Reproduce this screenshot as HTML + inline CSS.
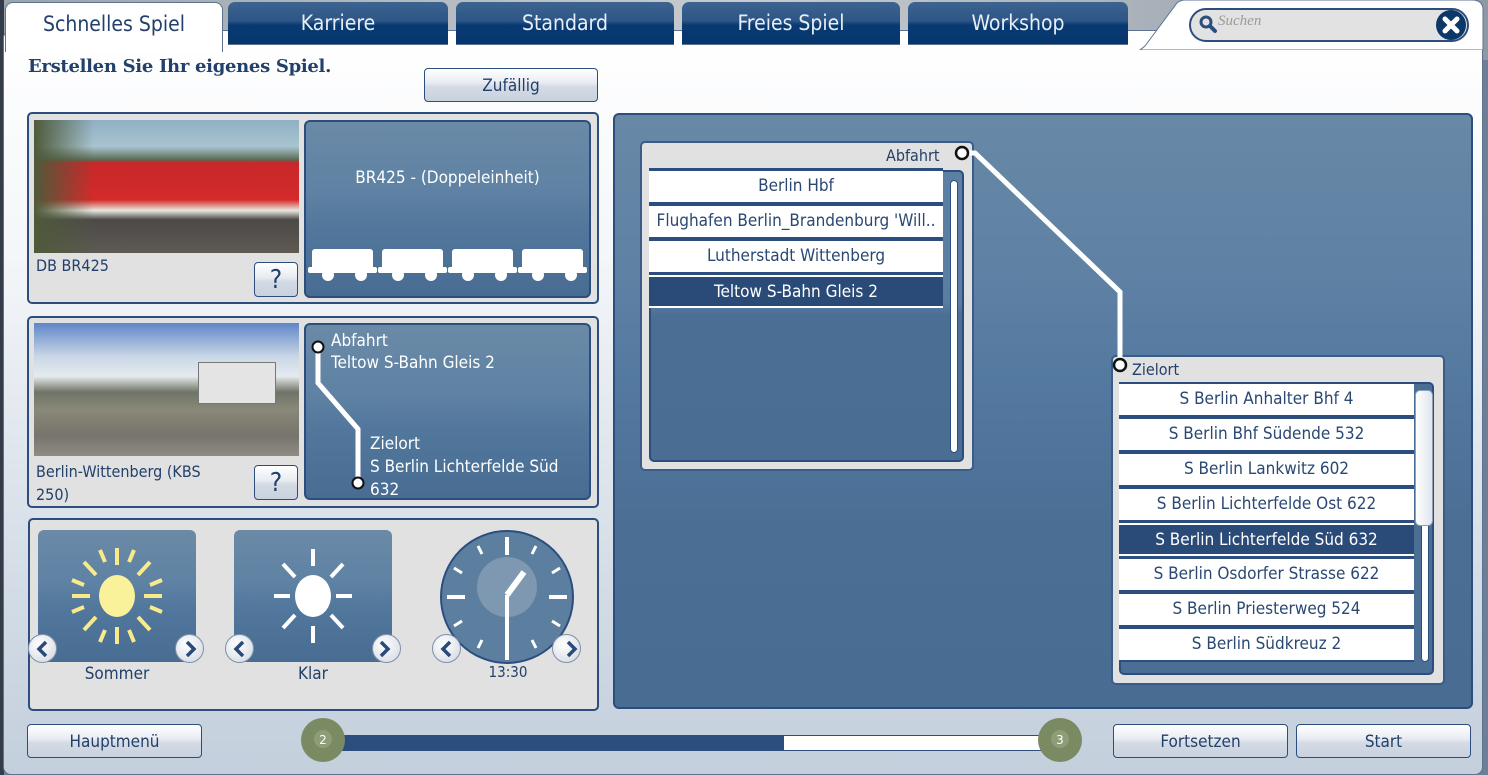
<!DOCTYPE html>
<html><head><meta charset="utf-8"><style>
*{box-sizing:border-box;margin:0;padding:0}
body{width:1488px;height:775px;overflow:hidden;position:relative;background:#6c7f96;font-family:"DejaVu Sans Condensed","Liberation Sans",sans-serif;color:#23406a}
.a{position:absolute}
.win{left:3px;top:30px;width:1480px;height:745px;border-radius:8px;background:linear-gradient(#ffffff 0%,#f4f6f9 30%,#dde4ec 60%,#c3cfdc 100%);border:1px solid #5d7390}
.tab{top:2px;height:43px;border-radius:7px 7px 0 0;background:linear-gradient(#3d6490 0%,#2d5586 45%,#083a72 55%,#06366c 100%);color:#e8eef6;font-size:21px;text-align:center;line-height:42px;border-bottom:1px solid #5d7390}
.box{border:2px solid #2c4e7e;border-radius:5px;background:#e1e1e1}
.blue{border:2px solid #2c4e7e;border-radius:6px;background:linear-gradient(#6a8aa6 0%,#5f82a4 40%,#52779c 60%,#486c92 100%)}
.btn{border:1px solid #2c4e7e;border-radius:4px;background:linear-gradient(#ffffff,#e7ebf1 45%,#d4dbe5 55%,#c8d1de);font-size:17px;text-align:center;color:#23406a}
.row{height:31px;background:#fff;font-size:17px;text-align:center;line-height:30px;color:#2a4872;white-space:nowrap;overflow:hidden}
.sel{background:#2a4a78;color:#fff}
.arr{width:29px;height:29px;border-radius:50%;background:radial-gradient(circle at 40% 35%,#fff,#cfd6e0);border:1px solid #8091a8}
.wl{color:#fff;font-size:17px}
</style></head><body>
<div class="a" style="left:0;top:0;width:1488px;height:60px;background:linear-gradient(90deg,#9aa4ad,#c8ccd0 50%,#8e99a6)"></div>
<div class="a" style="left:0;top:0;width:4px;height:775px;background:#333c48"></div>
<div class="a win"></div>
<svg class="a" style="left:0;top:0" width="1488" height="50"><path d="M1145 46 L1177 3 Q1180 0 1186 0 L1472 0 Q1483 0 1483 10 L1483 50 L1140 50 Z" fill="#fff" stroke="#5d7390"/></svg>
<div class="a" style="left:5px;top:2px;width:218px;height:50px;background:#fff;border:1px solid #5d7390;border-bottom:none;border-radius:8px 8px 0 0;font-size:21px;color:#23406a;text-align:center;line-height:42px">Schnelles Spiel</div>
<div class="a tab" style="left:228px;width:220px">Karriere</div>
<div class="a tab" style="left:456px;width:218px">Standard</div>
<div class="a tab" style="left:682px;width:218px">Freies Spiel</div>
<div class="a tab" style="left:908px;width:220px">Workshop</div>
<div class="a" style="left:1189px;top:8px;width:280px;height:34px;border:2px solid #2c4e7e;border-radius:17px;background:#e2e2e2"></div>
<svg class="a" style="left:1198px;top:14px" width="20" height="20"><circle cx="8" cy="8" r="5" fill="none" stroke="#2c4e7e" stroke-width="3"/><path d="M12 12 L17 17" stroke="#2c4e7e" stroke-width="4" stroke-linecap="round"/></svg>
<div class="a" style="left:1218px;top:13px;font-family:'Liberation Serif',serif;font-style:italic;font-size:15px;color:#9a9a9a">Suchen</div>
<svg class="a" style="left:1435px;top:9px" width="32" height="32"><circle cx="16" cy="16" r="15" fill="#0c3868"/><path d="M10 10 L22 22 M22 10 L10 22" stroke="#fff" stroke-width="5" stroke-linecap="round"/></svg>

<div class="a" style="left:28px;top:56px;font-family:'DejaVu Serif','Liberation Serif',serif;font-weight:bold;font-size:18px;color:#23406a;letter-spacing:-0.3px">Erstellen Sie Ihr eigenes Spiel.</div>
<div class="a btn" style="left:424px;top:68px;width:174px;height:34px;line-height:34px">Zufällig</div>

<div class="a box" style="left:27px;top:112px;width:572px;height:192px"></div>
<div class="a" style="left:34px;top:120px;width:265px;height:133px;background:linear-gradient(180deg,#8fb0c4 0%,#a9c4d0 20%,#5a6a52 30%,#c8282a 32%,#d42a2a 60%,#e8e8e0 68%,#4c4a48 75%,#5e5a52 100%)"></div>
<div class="a" style="left:34px;top:120px;width:60px;height:133px;background:linear-gradient(90deg,#4e5a3a,rgba(0,0,0,0))"></div>
<div class="a" style="left:36px;top:256px;font-size:16px">DB BR425</div>
<div class="a btn" style="left:254px;top:262px;width:44px;height:35px;font-size:26px;line-height:34px">?</div>
<div class="a blue" style="left:304px;top:120px;width:287px;height:178px"></div>
<div class="a wl" style="left:304px;top:168px;width:287px;text-align:center">BR425 - (Doppeleinheit)</div>
<svg class="a" style="left:306px;top:247px" width="284" height="40">
<g fill="#fff">
<rect x="6" y="2" width="61" height="24" rx="3"/><rect x="2" y="20" width="69" height="6" rx="2"/><circle cx="22" cy="28" r="6"/><circle cx="55" cy="28" r="6"/>
<rect x="76" y="2" width="61" height="24" rx="3"/><rect x="72" y="20" width="69" height="6" rx="2"/><circle cx="92" cy="28" r="6"/><circle cx="125" cy="28" r="6"/>
<rect x="146" y="2" width="61" height="24" rx="3"/><rect x="142" y="20" width="69" height="6" rx="2"/><circle cx="162" cy="28" r="6"/><circle cx="195" cy="28" r="6"/>
<rect x="216" y="2" width="61" height="24" rx="3"/><rect x="212" y="20" width="69" height="6" rx="2"/><circle cx="232" cy="28" r="6"/><circle cx="265" cy="28" r="6"/>
</g></svg>

<div class="a box" style="left:27px;top:316px;width:572px;height:192px"></div>
<div class="a" style="left:34px;top:323px;width:265px;height:133px;background:linear-gradient(180deg,#5f86c8 0%,#c8d6e6 25%,#e6ebef 40%,#6e7466 52%,#8a8878 65%,#76746c 85%,#8f8c84 100%)"></div>
<div class="a" style="left:198px;top:362px;width:78px;height:42px;background:#e4e4e4;border:1px solid #777"></div>
<div class="a" style="left:36px;top:460px;font-size:16px;line-height:23px">Berlin-Wittenberg (KBS<br>250)</div>
<div class="a btn" style="left:254px;top:465px;width:44px;height:35px;font-size:26px;line-height:34px">?</div>
<div class="a blue" style="left:304px;top:323px;width:287px;height:177px"></div>
<svg class="a" style="left:304px;top:323px" width="80" height="177"><path d="M14 24 L14 60 L54 106 L54 160" fill="none" stroke="#fff" stroke-width="5"/><circle cx="14" cy="24" r="5.5" fill="#fff" stroke="#111" stroke-width="2"/><circle cx="54" cy="160" r="5.5" fill="#fff" stroke="#111" stroke-width="2"/></svg>
<div class="a wl" style="left:331px;top:330px;line-height:22px">Abfahrt<br>Teltow S-Bahn Gleis 2</div>
<div class="a wl" style="left:370px;top:433px;line-height:23px">Zielort<br>S Berlin Lichterfelde Süd<br>632</div>

<div class="a box" style="left:28px;top:518px;width:571px;height:193px"></div>
<div class="a blue" style="left:38px;top:530px;width:158px;height:132px;border:none"></div>
<svg class="a" style="left:38px;top:530px" width="158" height="132"><g stroke="#f8ea8a" stroke-width="4"><path d="M52 66 L34 66 M106 66 L124 66 M79 18 L79 35 M79 97 L79 114 M58 45 L46 32 M100 45 L112 32 M58 87 L46 100 M100 87 L112 100 M62 20 L67 32 M96 20 L91 32 M62 112 L67 100 M96 112 L91 100 M34 50 L46 55 M124 50 L112 55 M34 82 L46 77 M124 82 L112 77"/></g><ellipse cx="79" cy="66" rx="18" ry="21" fill="#faf29a"/></svg>
<div class="a arr" style="left:28px;top:634px"></div><div class="a arr" style="left:175px;top:634px"></div>
<svg class="a" style="left:28px;top:634px" width="180" height="30"><path d="M18 8 L11 15 L18 22" fill="none" stroke="#2a4a78" stroke-width="3.5"/><path d="M159 8 L166 15 L159 22" fill="none" stroke="#2a4a78" stroke-width="3.5"/></svg>
<div class="a" style="left:38px;top:664px;width:158px;text-align:center;font-size:17px">Sommer</div>
<div class="a blue" style="left:234px;top:530px;width:158px;height:132px;border:none"></div>
<svg class="a" style="left:234px;top:530px" width="158" height="132"><g stroke="#fff" stroke-width="4"><path d="M56 66 L40 66 M102 66 L118 66 M79 19 L79 36 M79 96 L79 113 M61 47 L49 34 M97 47 L109 34 M61 85 L49 98 M97 85 L109 98"/></g><ellipse cx="79" cy="66" rx="18" ry="21" fill="#fff"/></svg>
<div class="a arr" style="left:225px;top:634px"></div><div class="a arr" style="left:372px;top:634px"></div>
<svg class="a" style="left:225px;top:634px" width="180" height="30"><path d="M18 8 L11 15 L18 22" fill="none" stroke="#2a4a78" stroke-width="3.5"/><path d="M156 8 L163 15 L156 22" fill="none" stroke="#2a4a78" stroke-width="3.5"/></svg>
<div class="a" style="left:234px;top:664px;width:158px;text-align:center;font-size:17px">Klar</div>
<svg class="a" style="left:438px;top:530px" width="140" height="136"><circle cx="69" cy="67" r="66" fill="#5c7fa0" stroke="#2c4e7e" stroke-width="2"/><circle cx="69" cy="57" r="30" fill="#7f98b2"/>
<g stroke="#fff" stroke-width="4"><path d="M69 7 L69 25 M69 109 L69 127 M9 67 L27 67 M111 67 L129 67"/></g>
<g stroke="#fff" stroke-width="3"><path d="M98 16 L94 24 M122 38 L114 43 M122 96 L114 91 M98 118 L94 110 M40 118 L44 110 M16 96 L24 91 M16 38 L24 43 M40 16 L44 24"/></g>
<path d="M69 65 L69 130" stroke="#fff" stroke-width="4"/><path d="M69 65 L86 42" stroke="#fff" stroke-width="6"/></svg>
<div class="a arr" style="left:432px;top:634px"></div><div class="a arr" style="left:552px;top:634px"></div>
<svg class="a" style="left:432px;top:634px" width="160" height="30"><path d="M18 8 L11 15 L18 22" fill="none" stroke="#2a4a78" stroke-width="3.5"/><path d="M136 8 L143 15 L136 22" fill="none" stroke="#2a4a78" stroke-width="3.5"/></svg>
<div class="a" style="left:438px;top:663px;width:140px;text-align:center;font-size:15px">13:30</div>

<div class="a blue" style="left:613px;top:113px;width:860px;height:596px;background:linear-gradient(#6888a6 0%,#5f82a4 25%,#5479a0 45%,#4a6e94 70%,#486c92 100%)"></div>
<div class="a box" style="left:640px;top:141px;width:334px;height:330px;border-color:#3b5c88"></div>
<div class="a" style="left:886px;top:146px;font-size:16px">Abfahrt</div>
<div class="a" style="left:649px;top:170px;width:315px;height:292px;border-radius:5px;background:linear-gradient(#5c7fa3 0%,#597ea4 45%,#4a6e94 50%,#496d93 100%);border:2px solid #2c4e7e"></div>
<div class="a" style="left:950px;top:180px;width:8px;height:273px;background:#fff;border-radius:4px;border:1px solid #2c4e7e"></div>
<div class="a" style="left:649px;top:168px;width:294px;height:140px;background:#2c4e7e"></div>
<div class="a row" style="left:649px;top:171px;width:294px">Berlin Hbf</div>
<div class="a row" style="left:649px;top:206px;width:294px">Flughafen Berlin_Brandenburg 'Will..</div>
<div class="a row" style="left:649px;top:241px;width:294px">Lutherstadt Wittenberg</div>
<div class="a row sel" style="left:649px;top:275px;width:294px;border-top:2px solid #fff;border-bottom:2px solid #fff;height:33px">Teltow S-Bahn Gleis 2</div>

<div class="a box" style="left:1111px;top:355px;width:334px;height:330px;border-color:#3b5c88"></div>
<svg class="a" style="left:950px;top:140px" width="190" height="240"><path d="M12 13 L25 13 L170 152 L170 220" fill="none" stroke="#fff" stroke-width="5"/><circle cx="12" cy="13" r="6" fill="#fff" stroke="#111" stroke-width="2.5"/><circle cx="170" cy="225" r="6" fill="#fff" stroke="#111" stroke-width="2.5"/></svg>
<div class="a" style="left:1132px;top:360px;font-size:16px">Zielort</div>
<div class="a" style="left:1119px;top:382px;width:315px;height:293px;border-radius:5px;background:#4a6e94;border:2px solid #2c4e7e"></div>
<div class="a" style="left:1119px;top:382px;width:295px;height:280px;background:#2c4e7e"></div>
<div class="a row" style="left:1119px;top:384px;width:295px">S Berlin Anhalter Bhf 4</div>
<div class="a row" style="left:1119px;top:419px;width:295px">S Berlin Bhf Südende 532</div>
<div class="a row" style="left:1119px;top:454px;width:295px">S Berlin Lankwitz 602</div>
<div class="a row" style="left:1119px;top:489px;width:295px">S Berlin Lichterfelde Ost 622</div>
<div class="a row sel" style="left:1119px;top:523px;width:295px;border-top:2px solid #fff;border-bottom:2px solid #fff;height:33px">S Berlin Lichterfelde Süd 632</div>
<div class="a row" style="left:1119px;top:559px;width:295px">S Berlin Osdorfer Strasse 622</div>
<div class="a row" style="left:1119px;top:594px;width:295px">S Berlin Priesterweg 524</div>
<div class="a row" style="left:1119px;top:629px;width:295px">S Berlin Südkreuz 2</div>
<div class="a" style="left:1421px;top:390px;width:8px;height:272px;background:#fff;border-radius:4px;border:1px solid #2c4e7e"></div>
<div class="a" style="left:1415px;top:390px;width:18px;height:136px;border-radius:5px;background:linear-gradient(90deg,#fff,#dfe5ee);border:1px solid #8ea0b8"></div>

<div class="a btn" style="left:27px;top:724px;width:175px;height:34px;line-height:34px">Hauptmenü</div>
<div class="a" style="left:340px;top:735px;width:443px;height:16px;background:#2c4e7e"></div>
<div class="a" style="left:783px;top:735px;width:260px;height:16px;background:#fff;border:1px solid #2c4e7e"></div>
<svg class="a" style="left:300px;top:717px" width="48" height="48"><circle cx="23" cy="23" r="22" fill="#7a8a62"/><circle cx="23" cy="22" r="9" fill="#8e9c78"/><text x="23" y="27" font-size="12" fill="#fff" text-anchor="middle" font-family="DejaVu Sans">2</text></svg>
<svg class="a" style="left:1036px;top:717px" width="48" height="48"><circle cx="24" cy="23" r="22" fill="#7a8a62"/><circle cx="24" cy="22" r="9" fill="#8e9c78"/><text x="24" y="27" font-size="12" fill="#fff" text-anchor="middle" font-family="DejaVu Sans">3</text></svg>
<div class="a btn" style="left:1113px;top:724px;width:175px;height:34px;line-height:34px">Fortsetzen</div>
<div class="a btn" style="left:1296px;top:724px;width:175px;height:34px;line-height:34px">Start</div>
</body></html>
